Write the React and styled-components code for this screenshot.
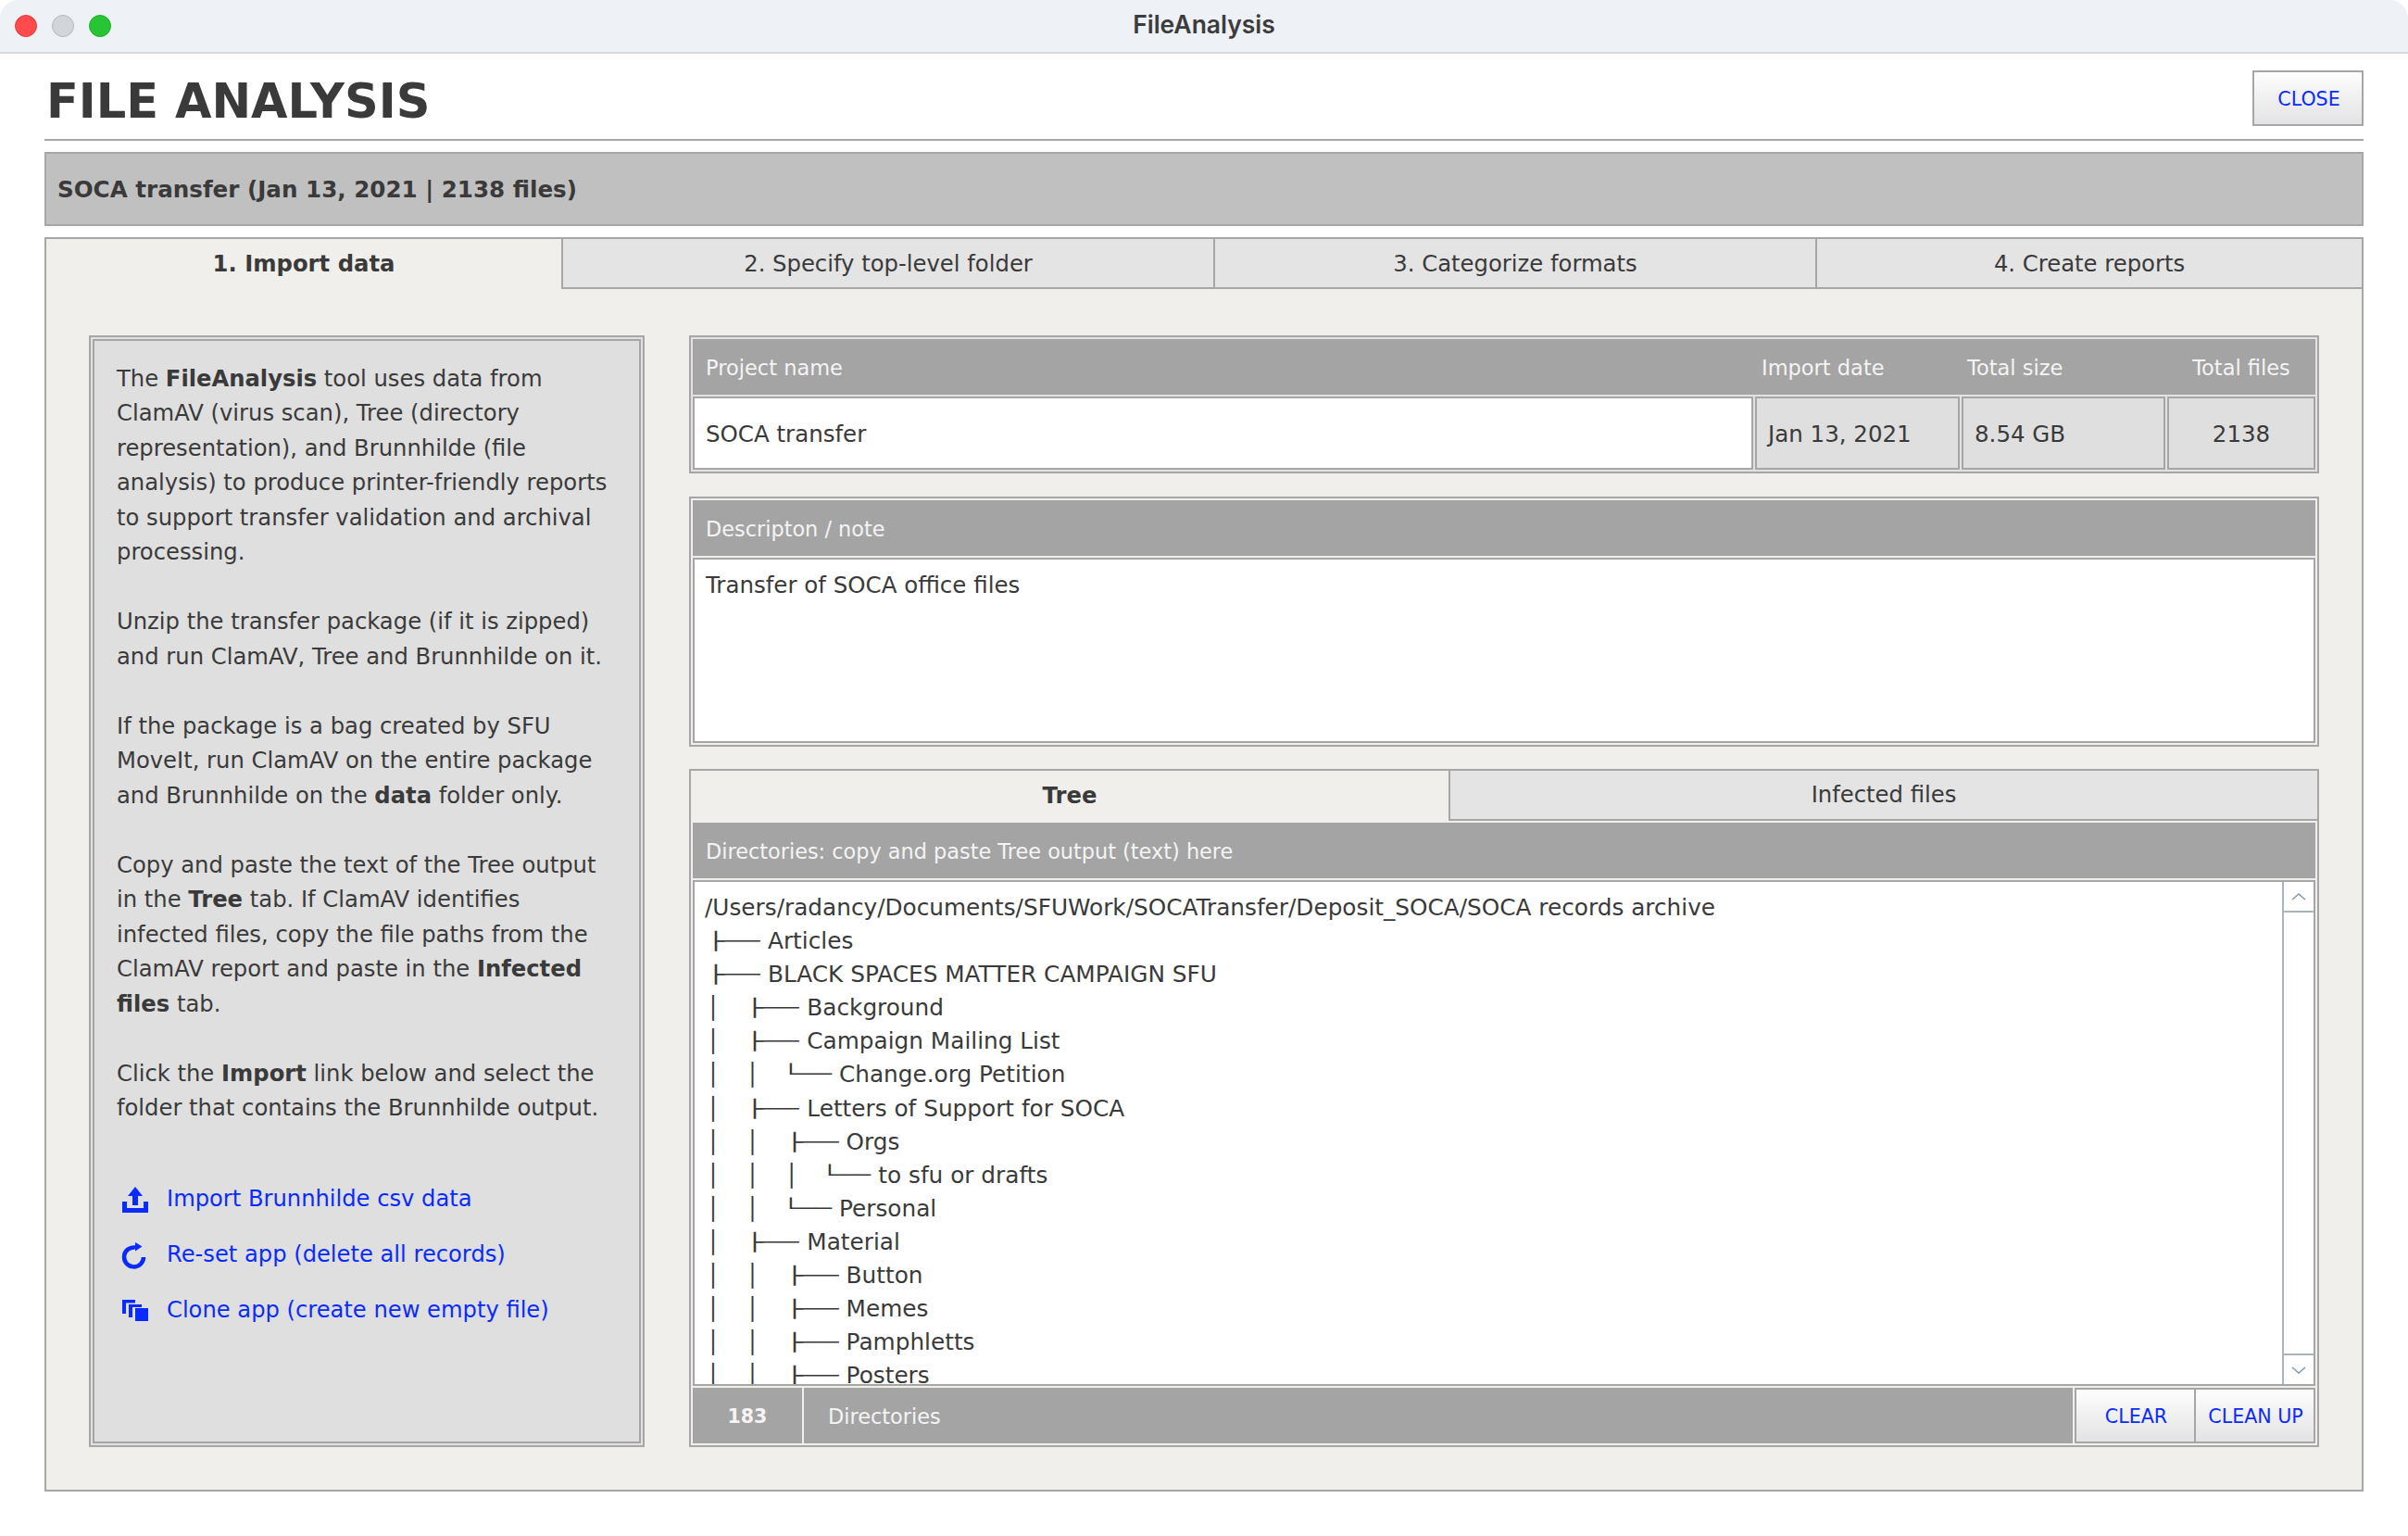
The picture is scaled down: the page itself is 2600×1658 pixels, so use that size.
import React from "react";
import styled, { createGlobalStyle } from "styled-components";

const line = "#a6a6a6";
const ink = "#3a3a3a";
const link = "#0a2bff";
const panel = "#f0efeb";

const Global = createGlobalStyle`
  html, body { margin: 0; padding: 0; background: #fff; }
  body { font-family: "DejaVu Sans", Verdana, sans-serif; color: ${ink}; }
  * { box-sizing: border-box; }
`;

const Window = styled.div`
  width: 2600px;
  height: 1658px;
  background: #fff;
  overflow: hidden;
`;
const TitleBar = styled.header`
  height: 58px;
  background: #eef1f5;
  border-bottom: 2px solid #d8d9db;
  border-radius: 20px 20px 0 0;
  position: relative;
  display: flex;
  align-items: center;
  justify-content: center;
  padding-bottom: 4px;
  font: 600 26.5px Inter, "Liberation Sans", sans-serif;
  color: #3c3c3c;
`;
const Lights = styled.div`
  position: absolute;
  left: 16px;
  top: 16px;
  display: flex;
  gap: 16px;
`;
const Light = styled.span`
  width: 24px;
  height: 24px;
  border-radius: 50%;
  background: ${(p) => p.$c};
  border: 1px solid ${(p) => p.$b};
`;
const Content = styled.main`
  padding: 0 48px;
`;
const HeaderRow = styled.div`
  height: 94px;
  display: flex;
  justify-content: space-between;
  align-items: flex-start;
  border-bottom: 2px solid ${line};
`;
const Heading = styled.h1`
  margin: 22px 0 0 2px;
  font-size: 51px;
  line-height: 60px;
  font-weight: 700;
  color: ${ink};
`;
const Btn = styled.button`
  font-family: inherit;
  color: ${link};
  background: linear-gradient(#fdfdfd, #e3e3e5);
  border: 2px solid ${line};
  padding: 1px 0 0 2px;
  font-size: 20.6px;
`;
const CloseBtn = styled(Btn)`
  margin-top: 18px;
  width: 120px;
  height: 60px;
`;
const ProjectBar = styled.div`
  margin-top: 12px;
  height: 80px;
  background: #c0c0c0;
  border: 2px solid ${line};
  display: flex;
  align-items: center;
  padding: 1px 0 0 12px;
  font-size: 24.6px;
  font-weight: 700;
`;
const TabPanel = styled.section`
  margin-top: 12px;
  height: 1354px;
  background: ${panel};
  border: 2px solid ${line};
`;
const TabRow = styled.nav`
  display: grid;
  grid-template-columns: 556px 704px 650px 1fr;
  height: 54px;
`;
const InnerTabRow = styled.nav`
  display: grid;
  grid-template-columns: 818px 1fr;
  height: 54px;
  margin: -2px -2px 2px;
`;
const Tab = styled.div`
  display: flex;
  align-items: center;
  justify-content: center;
  padding-bottom: ${(p) => p.$pb || 0}px;
  font-size: 24.3px;
  color: ${ink};
  font-weight: ${(p) => (p.$active ? 700 : 400)};
  background: ${(p) => (p.$active ? "transparent" : "#e4e4e4")};
  border-left: ${(p) => (p.$active ? "0" : `2px solid ${line}`)};
  border-bottom: ${(p) => (p.$active ? "0" : `2px solid ${line}`)};
`;
const Body = styled.div`
  padding: 50px 46px 0;
  display: grid;
  grid-template-columns: 600px 1760px;
  gap: 48px;
`;
const Info = styled.aside`
  height: 1200px;
  padding: 2px;
  background: #dfdfdf;
  border: 2px solid ${line};
`;
const InfoInner = styled.div`
  height: 100%;
  border: 2px solid ${line};
  padding: 21.5px 10px 0 24px;
  font-size: 24.25px;
  line-height: 37.5px;
  color: ${ink};
`;
const Para = styled.p`
  margin: 0 0 37.5px;
  white-space: nowrap;
`;
const Links = styled.div`
  margin-top: 62.5px;
  display: flex;
  flex-direction: column;
  gap: 24px;
`;
const LinkRow = styled.a`
  display: flex;
  align-items: center;
  height: 36px;
  color: ${link};
  font-size: 24.2px;
  white-space: nowrap;
  gap: 19px;
  svg { width: 30px; height: 30px; flex: none; margin-left: 5px; fill: ${link}; }
`;
const Right = styled.div`
  display: flex;
  flex-direction: column;
`;
const Box = styled.div`
  border: 2px solid ${line};
  padding: 2px;
  background: ${(p) => p.$bg || panel};
  margin-top: ${(p) => p.$mt || 0}px;
  height: ${(p) => p.$h}px;
  display: flex;
  flex-direction: column;
`;
const Grid = styled.div`
  display: grid;
  grid-template-columns: 1145px 221px 220px 1fr;
  column-gap: 2px;
`;
const HeadGrid = styled(Grid)`
  height: 60px;
  padding-top: 2px;
  background: #a4a4a4;
  color: #f4f4f4;
  font-size: 22.5px;
  align-items: center;
  margin-bottom: 2px;
`;
const HeadCell = styled.span`
  padding-left: ${(p) => p.$pl || 0}px;
  text-align: ${(p) => (p.$center ? "center" : "left")};
`;
const Cell = styled.div`
  height: 79px;
  padding-top: 2px;
  border: 2px solid ${line};
  background: ${(p) => (p.$white ? "#fff" : "#dfdfdf")};
  display: flex;
  align-items: center;
  justify-content: ${(p) => (p.$center ? "center" : "flex-start")};
  padding-left: ${(p) => (p.$center ? 0 : 12)}px;
  font-size: 24.5px;
  color: ${ink};
`;
const Head = styled.div`
  height: 60px;
  flex: none;
  background: #a4a4a4;
  color: #f4f4f4;
  font-size: 22.4px;
  display: flex;
  align-items: center;
  padding: 2px 0 0 14px;
  margin-bottom: 2px;
`;
const NoteBox = styled.div`
  flex: 1;
  border: 2px solid ${line};
  background: #fff;
  padding: 10px 12px;
  font-size: 24.5px;
  line-height: 36px;
`;
const TreeWrap = styled.div`
  flex: none;
  height: 546px;
  margin-bottom: 2px;
  border: 2px solid ${line};
  background: #fff;
  display: flex;
  overflow: hidden;
`;
const TreeText = styled.div`
  flex: 1;
  padding: 10px 0 0 11px;
  font-size: 24.75px;
  line-height: 36.1px;
  overflow: hidden;
  white-space: pre;
  color: ${ink};
`;
const Row = styled.div`
  height: 36.1px;
  display: flex;
`;
const Guide = styled.span`
  flex: none;
  width: 42.3px;
  padding-left: 1.6px;
  display: inline-block;
  transform: scaleY(0.95);
`;
const Branch = styled.span`
  flex: none;
  width: ${(p) => (p.$corner ? 60.4 : 68)}px;
  padding-left: ${(p) => (p.$corner ? 0.7 : 4.6)}px;
  display: inline-block;
  transform-origin: ${(p) => (p.$corner ? 8.1 : 12)}px 50%;
  transform: scale(${(p) => (p.$corner ? "1.18, 0.8" : "1.27, 0.75")});
`;
const ScrollBar = styled.div`
  width: 34px;
  flex: none;
  border-left: 2px solid #a9b6bf;
  display: flex;
  flex-direction: column;
  justify-content: space-between;
`;
const ScrollBtn = styled.div`
  height: 33px;
  display: flex;
  align-items: center;
  justify-content: center;
  border-${(p) => p.$edge}: 2px solid #a9b6bf;
  svg { width: 16px; height: 8px; fill: none; stroke: #8497a3; stroke-width: 1.5; }
`;
const Foot = styled.div`
  display: grid;
  grid-template-columns: 118px 1fr 260px;
  column-gap: 2px;
  height: 60px;
  flex: none;
`;
const CountCell = styled.div`
  background: #a4a4a4;
  color: #f4f4f4;
  font-size: 20.5px;
  font-weight: 700;
  display: flex;
  align-items: center;
  justify-content: center;
  padding-top: 2px;
`;
const FootLabel = styled.div`
  background: #a4a4a4;
  color: #f4f4f4;
  font-size: 22.4px;
  display: flex;
  align-items: center;
  padding: 2px 0 0 26px;
`;
const FootButtons = styled.div`
  display: flex;
  button { flex: 1; }
  button + button { margin-left: -2px; }
`;
const B = styled.b`
  font-weight: 700;
`;

const tree = [
  [[], "t", "Articles"],
  [[], "t", "BLACK SPACES MATTER CAMPAIGN SFU"],
  [[1], "t", "Background"],
  [[1], "t", "Campaign Mailing List"],
  [[1, 1], "c", "Change.org Petition"],
  [[1], "t", "Letters of Support for SOCA"],
  [[1, 1], "t", "Orgs"],
  [[1, 1, 1], "c", "to sfu or drafts"],
  [[1, 1], "c", "Personal"],
  [[1], "t", "Material"],
  [[1, 1], "t", "Button"],
  [[1, 1], "t", "Memes"],
  [[1, 1], "t", "Pamphletts"],
  [[1, 1], "t", "Posters"],
];

export default function App() {
  return (
    <Window>
      <Global />
      <TitleBar>
        <Lights>
          <Light $c="#ff4b4b" $b="#e23d3d" />
          <Light $c="#d2d5d9" $b="#b5b8bc" />
          <Light $c="#27c533" $b="#1fae2b" />
        </Lights>
        FileAnalysis
      </TitleBar>
      <Content>
        <HeaderRow>
          <Heading>FILE ANALYSIS</Heading>
          <CloseBtn>CLOSE</CloseBtn>
        </HeaderRow>
        <ProjectBar>SOCA transfer (Jan 13, 2021 | 2138 files)</ProjectBar>
        <TabPanel>
          <TabRow>
            <Tab $active $pb="2">1. Import data</Tab>
            <Tab>2. Specify top-level folder</Tab>
            <Tab>3. Categorize formats</Tab>
            <Tab>4. Create reports</Tab>
          </TabRow>
          <Body>
            <Info>
              <InfoInner>
                <Para>
                  The <B>FileAnalysis</B> tool uses data from<br />
                  ClamAV (virus scan), Tree (directory<br />
                  representation), and Brunnhilde (file<br />
                  analysis) to produce printer-friendly reports<br />
                  to support transfer validation and archival<br />
                  processing.
                </Para>
                <Para>
                  Unzip the transfer package (if it is zipped)<br />
                  and run ClamAV, Tree and Brunnhilde on it.
                </Para>
                <Para>
                  If the package is a bag created by SFU<br />
                  MoveIt, run ClamAV on the entire package<br />
                  and Brunnhilde on the <B>data</B> folder only.
                </Para>
                <Para>
                  Copy and paste the text of the Tree output<br />
                  in the <B>Tree</B> tab. If ClamAV identifies<br />
                  infected files, copy the file paths from the<br />
                  ClamAV report and paste in the <B>Infected</B><br />
                  <B>files</B> tab.
                </Para>
                <Para>
                  Click the <B>Import</B> link below and select the<br />
                  folder that contains the Brunnhilde output.
                </Para>
                <Links>
                  <LinkRow>
                    <svg viewBox="0 0 30 30">
                      <path d="M15 1 L23 11 H18 V21 H12 V11 H7 Z" />
                      <path d="M1 17 H6 V24 H24 V17 H29 V29 H1 Z" />
                    </svg>
                    Import Brunnhilde csv data
                  </LinkRow>
                  <LinkRow>
                    <svg viewBox="0 0 30 30">
                      <path d="M15 6.5 A10.5 10.5 0 1 0 24 17" fill="none" stroke={link} strokeWidth="4.5" />
                      <path d="M15 1 L22.5 5.5 L15 10.5 Z" />
                    </svg>
                    Re-set app (delete all records)
                  </LinkRow>
                  <LinkRow>
                    <svg viewBox="0 0 30 30">
                      <path d="M1 3 H15 V6.5 H5 V18 H1 Z" />
                      <path d="M8 8 H22 V11 H12 V22 H8 Z" />
                      <rect x="15" y="12" width="14" height="14" />
                    </svg>
                    Clone app (create new empty file)
                  </LinkRow>
                </Links>
              </InfoInner>
            </Info>
            <Right>
              <Box $h="149" $bg="#e2e2e2">
                <HeadGrid>
                  <HeadCell $pl="14">Project name</HeadCell>
                  <HeadCell $pl="7">Import date</HeadCell>
                  <HeadCell $pl="6">Total size</HeadCell>
                  <HeadCell $center>Total files</HeadCell>
                </HeadGrid>
                <Grid>
                  <Cell $white>SOCA transfer</Cell>
                  <Cell>Jan 13, 2021</Cell>
                  <Cell>8.54 GB</Cell>
                  <Cell $center>2138</Cell>
                </Grid>
              </Box>
              <Box $h="270" $mt="25">
                <Head>Descripton / note</Head>
                <NoteBox>Transfer of SOCA office files</NoteBox>
              </Box>
              <Box $h="732" $mt="24">
                <InnerTabRow>
                  <Tab $active $pb="2">Tree</Tab>
                  <Tab $pb="1">Infected files</Tab>
                </InnerTabRow>
                <Head>Directories: copy and paste Tree output (text) here</Head>
                <TreeWrap>
                  <TreeText>
                    <Row>/Users/radancy/Documents/SFUWork/SOCATransfer/Deposit_SOCA/SOCA records archive</Row>
                    {tree.map(([guides, kind, name]) => (
                      <Row key={name}>
                        {guides.map((_, i) => (
                          <Guide key={i}>│</Guide>
                        ))}
                        <Branch $corner={kind === "c"}>{kind === "c" ? "└──" : "├──"}</Branch>
                        {name}
                      </Row>
                    ))}
                  </TreeText>
                  <ScrollBar>
                    <ScrollBtn $edge="bottom">
                      <svg viewBox="0 0 16 8"><path d="M1 7 L8 1 L15 7" /></svg>
                    </ScrollBtn>
                    <ScrollBtn $edge="top">
                      <svg viewBox="0 0 16 8"><path d="M1 1 L8 7 L15 1" /></svg>
                    </ScrollBtn>
                  </ScrollBar>
                </TreeWrap>
                <Foot>
                  <CountCell>183</CountCell>
                  <FootLabel>Directories</FootLabel>
                  <FootButtons>
                    <Btn>CLEAR</Btn>
                    <Btn>CLEAN UP</Btn>
                  </FootButtons>
                </Foot>
              </Box>
            </Right>
          </Body>
        </TabPanel>
      </Content>
    </Window>
  );
}
